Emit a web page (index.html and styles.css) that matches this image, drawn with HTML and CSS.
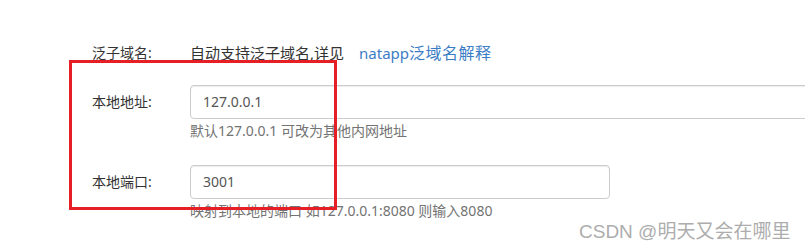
FILE: index.html
```html
<!DOCTYPE html>
<html lang="zh">
<head>
<meta charset="utf-8">
<link rel="stylesheet" href="styles.css">
</head>
<body>
<div class="form">
  <div class="row">
    <div class="label">泛子域名:</div>
    <div class="desc">自动支持泛子域名,详见<a class="link">natapp<span class="cjk">泛域名解释</span></a></div>
  </div>
  <div class="group">
    <div class="label field-label">本地地址:</div>
    <div class="field">
      <div class="input wide">127.0.0.1</div>
      <div class="help">默认127.0.0.1 可改为其他内网地址</div>
    </div>
  </div>
  <div class="group">
    <div class="label field-label">本地端口:</div>
    <div class="field">
      <div class="input">3001</div>
      <div class="help">映射到本地的端口 如127.0.0.1:8080 则输入8080</div>
    </div>
  </div>
</div>
<div class="highlight"></div>
<div class="watermark">CSDN @明天又会在哪里</div>
</body>
</html>
```
FILE: styles.css
```css
* { box-sizing: border-box; }
html, body {
  margin: 0;
  padding: 0;
  background: #fff;
  width: 805px;
  height: 249px;
  overflow: hidden;
  position: relative;
  font-family: "Noto Sans", "Noto Sans CJK SC", sans-serif;
  font-size: 14px;
  color: #333;
}
.form {
  padding: 43px 0 0 92px;
}
.row {
  display: flex;
  height: 20px;
  line-height: 20px;
  margin-bottom: 22px;
}
.label {
  width: 98px;
  flex: none;
  color: #333;
}
.desc {
  font-size: 15px;
  white-space: nowrap;
}
.link {
  color: #3b7dc4;
  text-decoration: none;
  margin-left: 15px;
}
.link .cjk { font-size: 16px; letter-spacing: 0.5px; }
.group {
  display: flex;
  margin-bottom: 24px;
}
.field-label {
  line-height: 34px;
  height: 34px;
}
.field {
  display: flex;
  flex-direction: column;
}
.input {
  width: 420px;
  height: 34px;
  line-height: 32px;
  padding: 0 12px;
  border: 1px solid #ccc;
  border-radius: 4px;
  box-shadow: inset 0 1px 1px rgba(0,0,0,.075);
  color: #555;
  font-size: 14px;
}
.input.wide { width: 640px; }
.help {
  margin-top: 2px;
  line-height: 20px;
  color: #737373;
  white-space: nowrap;
}
.highlight {
  position: absolute;
  left: 69px;
  top: 60px;
  width: 268px;
  height: 150px;
  border: 3px solid #e61f27;
}
.watermark {
  position: absolute;
  left: 579px;
  top: 220px;
  line-height: 24px;
  font-size: 19px;
  color: #adadad;
  font-family: "Liberation Sans", "Noto Sans CJK SC", sans-serif;
  white-space: nowrap;
}
```
